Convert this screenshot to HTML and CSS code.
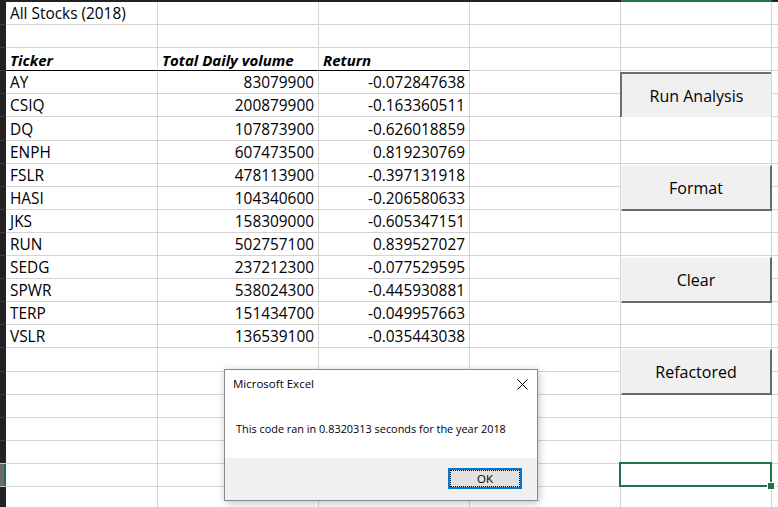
FILE: index.html
```html
<!DOCTYPE html>
<html>
<head>
<meta charset="utf-8">
<title>All Stocks (2018)</title>
<link rel="stylesheet" href="styles.css">
</head>
<body>
<div class="app">
  <div class="colhead">
    <div class="ch"></div><div class="ch"></div><div class="ch"></div><div class="ch"></div><div class="ch"></div><div class="ch ch-sel"></div><div class="ch"></div>
  </div>
  <div class="body">
    <div class="rowhead">
      <div class="rh"></div><div class="rh"></div><div class="rh"></div><div class="rh"></div><div class="rh"></div><div class="rh"></div><div class="rh"></div><div class="rh"></div><div class="rh"></div><div class="rh"></div><div class="rh"></div>
      <div class="rh"></div><div class="rh"></div><div class="rh"></div><div class="rh"></div><div class="rh"></div><div class="rh"></div><div class="rh"></div><div class="rh"></div><div class="rh"></div><div class="rh rh-sel"></div><div class="rh"></div>
    </div>
    <div class="grid">
      <div class="c">All Stocks (2018)</div><div class="c"></div><div class="c"></div><div class="c"></div><div class="c"></div><div class="c last"></div>
      <div class="c"></div><div class="c"></div><div class="c"></div><div class="c"></div><div class="c"></div><div class="c last"></div>
      <div class="c h">Ticker</div><div class="c h">Total Daily volume</div><div class="c h">Return</div><div class="c"></div><div class="c"></div><div class="c last"></div>

      <div class="c">AY</div><div class="c n">83079900</div><div class="c n">-0.072847638</div><div class="c"></div><div class="c"></div><div class="c last"></div>
      <div class="c">CSIQ</div><div class="c n">200879900</div><div class="c n">-0.163360511</div><div class="c"></div><div class="c"></div><div class="c last"></div>
      <div class="c">DQ</div><div class="c n">107873900</div><div class="c n">-0.626018859</div><div class="c"></div><div class="c"></div><div class="c last"></div>
      <div class="c">ENPH</div><div class="c n">607473500</div><div class="c n">0.819230769</div><div class="c"></div><div class="c"></div><div class="c last"></div>
      <div class="c">FSLR</div><div class="c n">478113900</div><div class="c n">-0.397131918</div><div class="c"></div><div class="c"></div><div class="c last"></div>
      <div class="c">HASI</div><div class="c n">104340600</div><div class="c n">-0.206580633</div><div class="c"></div><div class="c"></div><div class="c last"></div>
      <div class="c">JKS</div><div class="c n">158309000</div><div class="c n">-0.605347151</div><div class="c"></div><div class="c"></div><div class="c last"></div>
      <div class="c">RUN</div><div class="c n">502757100</div><div class="c n">0.839527027</div><div class="c"></div><div class="c"></div><div class="c last"></div>
      <div class="c">SEDG</div><div class="c n">237212300</div><div class="c n">-0.077529595</div><div class="c"></div><div class="c"></div><div class="c last"></div>
      <div class="c">SPWR</div><div class="c n">538024300</div><div class="c n">-0.445930881</div><div class="c"></div><div class="c"></div><div class="c last"></div>
      <div class="c">TERP</div><div class="c n">151434700</div><div class="c n">-0.049957663</div><div class="c"></div><div class="c"></div><div class="c last"></div>
      <div class="c">VSLR</div><div class="c n">136539100</div><div class="c n">-0.035443038</div><div class="c"></div><div class="c"></div><div class="c last"></div>

      <div class="c"></div><div class="c"></div><div class="c"></div><div class="c"></div><div class="c"></div><div class="c last"></div>
      <div class="c"></div><div class="c"></div><div class="c"></div><div class="c"></div><div class="c"></div><div class="c last"></div>
      <div class="c"></div><div class="c"></div><div class="c"></div><div class="c"></div><div class="c"></div><div class="c last"></div>
      <div class="c"></div><div class="c"></div><div class="c"></div><div class="c"></div><div class="c"></div><div class="c last"></div>
      <div class="c"></div><div class="c"></div><div class="c"></div><div class="c"></div><div class="c"></div><div class="c last"></div>
      <div class="c"></div><div class="c"></div><div class="c"></div><div class="c"></div><div class="c sel"><span class="handle"></span></div><div class="c last"></div>
      <div class="c"></div><div class="c"></div><div class="c"></div><div class="c"></div><div class="c"></div><div class="c last"></div>
    </div>
  </div>

  <button class="btn pressed btn-run">Run Analysis</button>
  <button class="btn btn-format">Format</button>
  <button class="btn btn-clear">Clear</button>
  <button class="btn btn-refactor">Refactored</button>

  <div class="dlg">
    <div class="dlg-title">
      <span>Microsoft Excel</span>
      <svg class="dlg-close" width="11" height="11" viewBox="0 0 11 11"><path d="M0.5 0.5 L10.5 10.5 M10.5 0.5 L0.5 10.5" stroke="#000" stroke-width="1" fill="none"/></svg>
    </div>
    <div class="dlg-msg">This code ran in 0.8320313 seconds for the year 2018</div>
    <div class="dlg-foot">
      <button class="ok">OK</button>
    </div>
  </div>
</div>
</body>
</html>
```

FILE: styles.css
```css
html, body {
  margin: 0;
  padding: 0;
  background: #ffffff;
}

.app {
  position: relative;
  width: 778px;
  height: 507px;
  overflow: hidden;
  font-family: "Open Sans", "Liberation Sans", sans-serif;
  color: #000;
}

/* column header strip */
.colhead {
  height: 2px;
  background: #222222;
  display: grid;
  grid-template-columns: 6px 152px 161px 151px 151px 151px 1fr;
}
.ch-sel {
  background: #217346;
}

.body {
  display: flex;
}

/* row header strip */
.rowhead {
  width: 6px;
  flex: none;
  display: grid;
  grid-auto-rows: 23.1px;
  background: #222222;
}
.rh {
  box-sizing: border-box;
  border-bottom: 1px solid #3a3a3a;
}
.rh-sel {
  background: #6b6b6b;
  border-top: 1px solid #c6c6c6;
  border-bottom: 1px solid #c6c6c6;
  box-shadow: inset -2px 0 0 #217346;
  margin-top: -1px;
}

/* cells */
.grid {
  flex: 1;
  display: grid;
  grid-template-columns: 152px 161px 151px 151px 151px 1fr;
  grid-auto-rows: 23.1px;
}
.c {
  position: relative;
  box-sizing: border-box;
  border-right: 1px solid #d4d4d4;
  border-bottom: 1px solid #d4d4d4;
  padding: 0 4px;
  font-size: 15.4px;
  line-height: 20px;
  white-space: nowrap;
  display: flex;
  align-items: flex-end;
}
.c.last {
  border-right: none;
}
.c.n {
  justify-content: flex-end;
}
.c.h {
  font-weight: 700;
  font-style: italic;
  font-size: 15px;
  border-bottom-color: #000;
}
.c.sel::after {
  content: "";
  position: absolute;
  top: -2px;
  left: -2px;
  right: -1px;
  bottom: -1px;
  border: 2px solid #217346;
  z-index: 2;
}
.handle {
  position: absolute;
  right: -3px;
  bottom: -3px;
  width: 6px;
  height: 6px;
  background: #217346;
  box-shadow: 0 0 0 1px #ffffff;
  z-index: 3;
}

/* form buttons on the sheet */
.btn {
  position: absolute;
  left: 621px;
  width: 151px;
  height: 46px;
  box-sizing: border-box;
  background: #f0f0f0;
  border: none;
  border-top: 1px solid #fafafa;
  border-left: 1px solid #fafafa;
  border-right: 2px solid #696969;
  border-bottom: 2px solid #696969;
  font-family: "Open Sans", "Liberation Sans", sans-serif;
  font-size: 16px;
  color: #000;
  padding: 0;
  z-index: 5;
}
.btn.pressed {
  border-top: 2px solid #6d6d6d;
  border-left: 2px solid #6d6d6d;
  border-right: none;
  border-bottom: none;
}
.btn-run { left: 620px; top: 72px; height: 45px; }
.btn-format { top: 165px; }
.btn-clear { top: 257px; }
.btn-refactor { top: 349px; }

/* message box */
.dlg {
  position: absolute;
  left: 224px;
  top: 369px;
  width: 314px;
  height: 132px;
  box-sizing: border-box;
  border: 1px solid #8a8a8a;
  background: #ffffff;
  box-shadow: 1px 2px 8px rgba(0, 0, 0, 0.25);
  display: flex;
  flex-direction: column;
  z-index: 10;
  font-family: "Open Sans", "Liberation Sans", sans-serif;
}
.dlg-title {
  height: 27px;
  flex: none;
  display: flex;
  align-items: center;
  justify-content: space-between;
  padding: 0 9px 0 8px;
  font-size: 11.5px;
  line-height: 16px;
  color: #000;
}
.dlg-close {
  display: block;
  margin-top: 1px;
}
.dlg-msg {
  flex: 1;
  padding: 24px 0 0 11px;
  font-size: 10.9px;
  line-height: 16px;
}
.dlg-foot {
  height: 42px;
  flex: none;
  background: #f0f0f0;
  display: flex;
  justify-content: flex-end;
  align-items: flex-start;
  padding: 10px 15px 0 0;
  box-sizing: border-box;
}
.ok {
  width: 74px;
  height: 21px;
  box-sizing: border-box;
  border: 2px solid #0078d7;
  background: #e1e1e1;
  outline: 1px dotted #000;
  outline-offset: -3px;
  font-family: "Open Sans", "Liberation Sans", sans-serif;
  font-size: 11.5px;
  line-height: 15px;
  padding: 0;
  color: #000;
}
```
